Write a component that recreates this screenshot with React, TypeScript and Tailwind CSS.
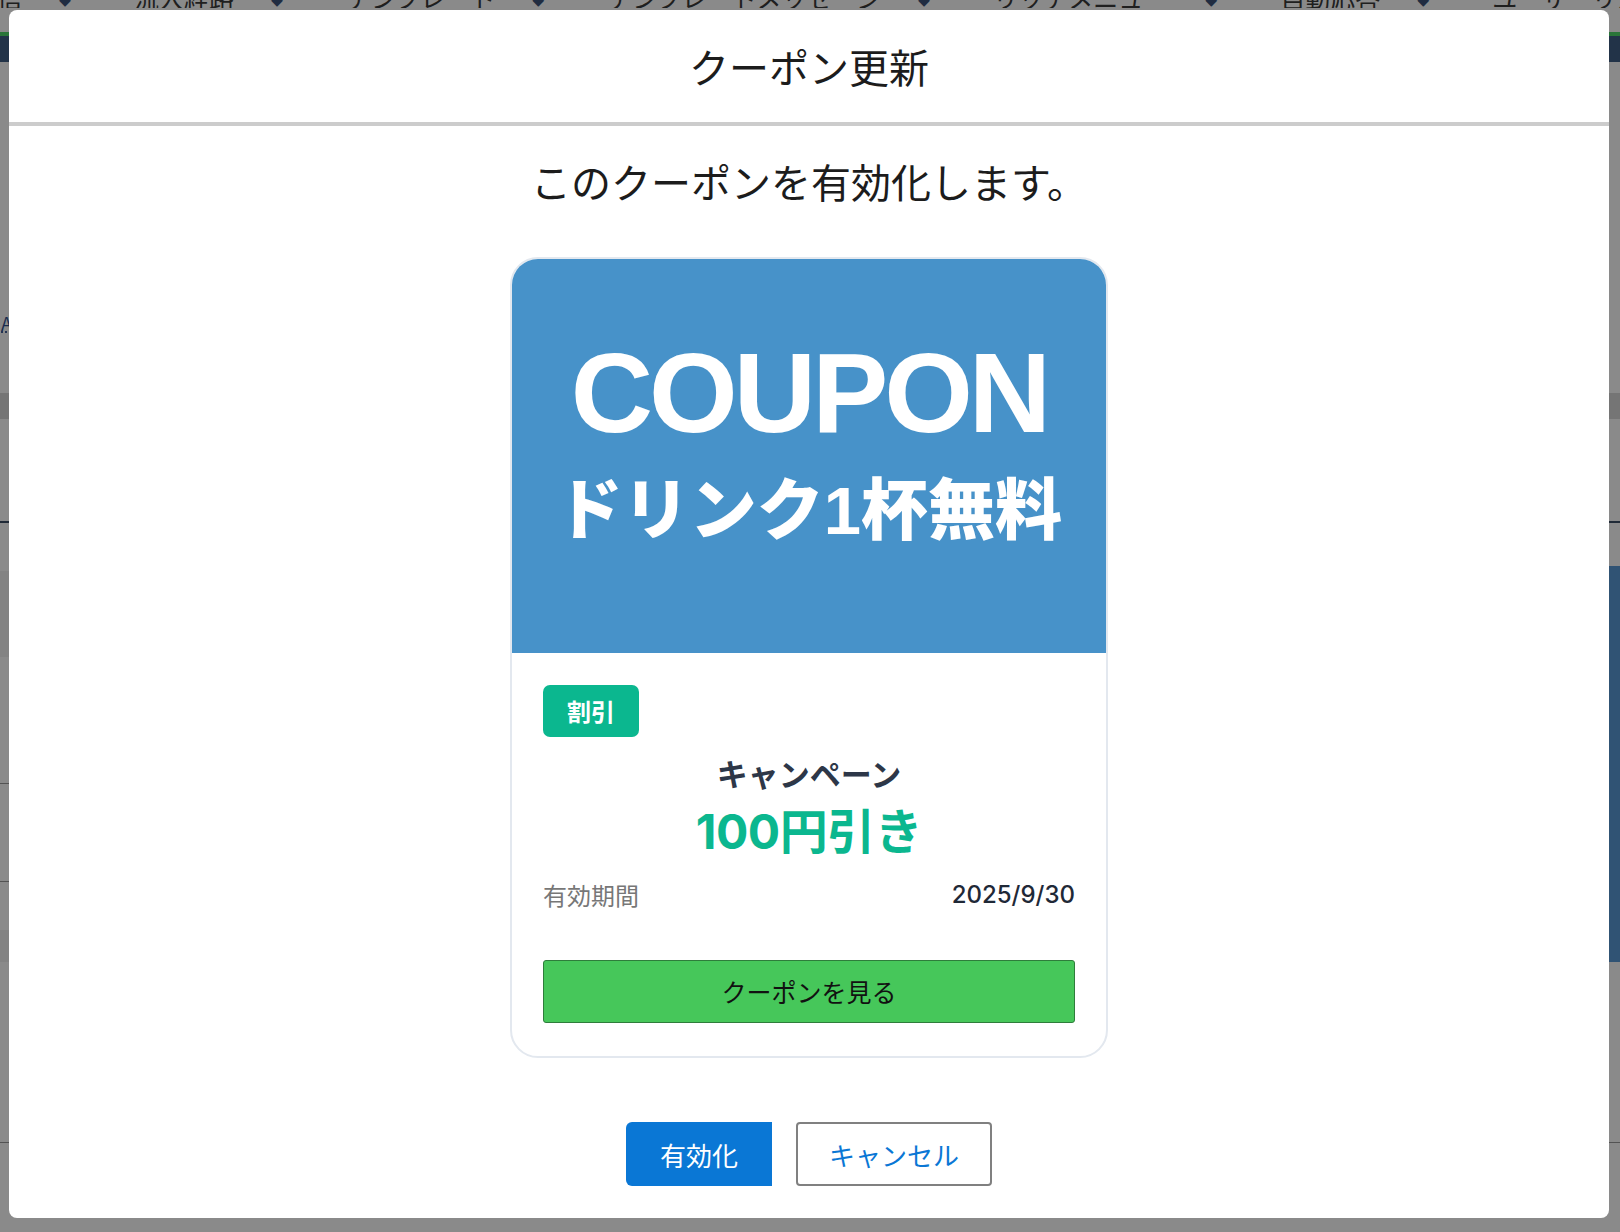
const navItems = ["配信", "流入経路", "テンプレート", "テンプレートメッセージ", "リッチメニュー", "自動応答", "ユーザーリスト"];

const BackgroundPage = () => {
  return (
    <div className="flex flex-col font-['Noto_Sans_CJK_JP',sans-serif]">
      {/* ページ上部のタブ */}
      <div className="flex h-[8px] items-end overflow-hidden">
        <div className="-ml-[28px] flex items-end gap-[63px] whitespace-nowrap">
          {navItems.map((item) => (
            <div key={item} className="flex items-end gap-[37px]">
              <span className="text-[25px] leading-[22px] text-[#3a3a3a]">{item}</span>
              <span className="mb-[1px] text-[12px] leading-none text-[#3b5278]">◆</span>
            </div>
          ))}
        </div>
      </div>
      <div className="h-[24px]" />
      <div className="h-[4px] bg-[#4fd86a]" />
      <div className="h-[26px] bg-[#3f5f86]" />
      <div className="h-[250px]" />
      <div className="flex h-[22px] items-center pl-[1px] text-[18px] text-[#2f4f8f] underline decoration-dotted">A</div>
      <div className="h-[59px]" />
      <div className="h-[26px] bg-[#d8d8d8]" />
      <div className="h-[102px]" />
      <div className="h-[2px] bg-[#3c4e66]" />
      <div className="flex h-[43px]" />
      <div className="flex h-[396px]">
        <div className="flex-1">
          <div className="h-[5px]" />
          <div className="h-[86px] bg-[#f2f2f2]" />
          <div className="h-[126px]" />
          <div className="h-[1px] bg-[#999]" />
          <div className="h-[97px]" />
          <div className="h-[1px] bg-[#999]" />
          <div className="h-[48px]" />
          <div className="h-[32px] bg-[#f2f2f2]" />
        </div>
        <div className="w-[60px] bg-[#5a9ad6]" />
      </div>
      <div className="h-[180px]" />
      <div className="h-[1px] bg-[#999]" />
    </div>
  );
};

export default function App() {
  return (
    <div className="relative h-[1232px] w-[1620px] overflow-hidden bg-white">
      <BackgroundPage />

      {/* オーバーレイ */}
      <div className="absolute inset-0 flex bg-black/[0.46] pb-[14px] pl-[9px] pr-[11px] pt-[10px]">
        <div className="flex h-[1208px] flex-1 flex-col rounded-[8px] bg-white font-['Noto_Sans_CJK_JP',sans-serif] text-[#1c1c1c]">
          {/* ヘッダー */}
          <div className="flex h-[116px] items-center justify-center border-b-4 border-[#cccccc]">
            <h2 className="text-[40px] leading-none">クーポン更新</h2>
          </div>

          {/* 本文 */}
          <div className="flex flex-col items-center pt-[27px]">
            <p className="text-[40px] leading-[57px]">このクーポンを有効化します。</p>

            {/* クーポンカード */}
            <div className="mt-[47px] w-[598px] overflow-hidden rounded-[28px] border-2 border-[#e3e8ef] bg-white">
              <div className="flex h-[394px] flex-col items-center bg-[#4792c9] pt-[77px] text-white">
                <div className="font-['Liberation_Sans',sans-serif] text-[114px] font-bold leading-none tracking-[-0.035em]">
                  COUPON
                </div>
                <div className="mt-[27px] font-['Liberation_Sans','Noto_Sans_CJK_JP',sans-serif] text-[67px] font-black leading-none">
                  ドリンク1杯無料
                </div>
              </div>

              <div className="flex flex-col px-[31px] pb-[33px] pt-[32px]">
                <span className="flex h-[52px] items-center self-start rounded-[7px] bg-[#0bb78f] px-[24px] text-[24px] font-bold text-white">
                  割引
                </span>
                <div className="mt-[13px] text-center text-[31px] font-bold leading-[45px] text-[#2d3748]">
                  キャンペーン
                </div>
                <div className="mt-[7px] text-center font-['Inter','Noto_Sans_CJK_JP',sans-serif] text-[48px] font-bold leading-[60px] tracking-[-0.01em] text-[#0bb78f]">
                  100円引き
                </div>
                <div className="mt-[15px] flex items-center justify-between text-[24px] leading-[36px]">
                  <span className="text-[#777777]">有効期間</span>
                  <span className="font-['Inter',sans-serif] font-medium text-[#1f2937]">2025/9/30</span>
                </div>
                <button className="mt-[47px] h-[63px] w-full rounded-[3px] border border-[#2e7d3b] bg-[#46c75a] text-[25px] text-[#111111]">
                  クーポンを見る
                </button>
              </div>
            </div>

            {/* ボタン */}
            <div className="mt-[64px] flex justify-center gap-[24px]">
              <button className="h-[64px] w-[146px] rounded-l-[6px] bg-[#0a77d5] text-[26px] text-white">
                有効化
              </button>
              <button className="h-[64px] w-[196px] rounded-[4px] border-2 border-[#808080] bg-white text-[26px] text-[#0a77d5]">
                キャンセル
              </button>
            </div>
          </div>
        </div>
      </div>
    </div>
  );
}
